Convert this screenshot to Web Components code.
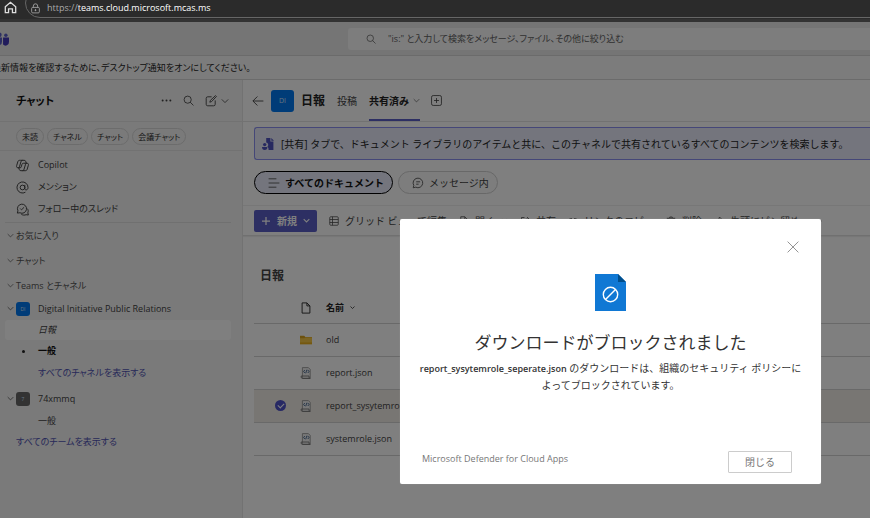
<!DOCTYPE html>
<html lang="ja">
<head>
<meta charset="utf-8">
<title>日報 | 共有済み</title>
<style>
    html, body {
        height: 100%;
        margin: 0;
        overflow: hidden;
    }
    body {
        font: 10px/16px "Open Sans", "Noto Sans CJK JP", sans-serif;
        color: #242424;
    }
</style>
</head>
<body>
<teams-window></teams-window>

<script>
class UIElement extends HTMLElement {
    constructor() {
        super();
        this.attachShadow({ mode: 'open' });
    }

    connectedCallback() {
        this.shadowRoot.innerHTML = `
            <style>
                * { box-sizing: border-box; }
                button, input {
                    margin: 0;
                    padding: 0;
                    border: 0;
                    background: none;
                    color: inherit;
                    font: inherit;
                    font-feature-settings: inherit;
                }
                a { color: inherit; text-decoration: none; }
                ${this.css()}
            </style>
            ${this.template()}
        `;
    }

    css() { return ''; }
    template() { return '<slot></slot>'; }
}

const ICONS = {
    home: '<path d="M2 9 10 2l8 7v9h-5v-6H7v6H2z"/>',
    lock: '<rect x="3" y="8" width="14" height="10" rx="2"/><path d="M6 8V5.500a4 4 0 0 1 8 0V8"/><circle cx="10" cy="13" r="1" fill="currentColor"/>',
    search: '<circle cx="8.500" cy="8.500" r="6.500"/><path d="m13 13 6 6"/>',
    more: '<g fill="currentColor" stroke="none"><circle cx="3" cy="10" r="1.800"/><circle cx="10" cy="10" r="1.800"/><circle cx="17" cy="10" r="1.800"/></g>',
    compose: '<path d="M11 3H4.500A2.500 2.500 0 0 0 2 5.500v10A2.500 2.500 0 0 0 4.500 18h10a2.500 2.500 0 0 0 2.500-2.500V9M8 12l1-3 8.500-8 1.500 1.500-8 8.500z"/>',
    chevron: '<path d="m2 6 8 8 8-8"/>',
    copilot: '<path d="M7 2h5.500c1.500 0 2 .7 2.500 2l.7 2.500H17c2 0 2.500 1.500 2 3.200l-1.700 5.800c-.5 1.700-1.300 2.500-3 2.500H7.500c-1.500 0-2-.7-2.500-2l-.7-2.500H3C1 13.500.5 12 1 10.300L2.700 4.500C3.200 2.800 4 2 5.700 2zM10 2c-1.500 0-2 1-2.400 2.300L5.300 12c-.3 1-.6 1.500-1.600 1.500M10 18c1.500 0 2-1 2.400-2.300L14.700 8c.3-1 .6-1.500 1.600-1.500h-4.500C10 6.500 9.500 7 9 8.800l-1 3.400c-.3 1-.8 1.300-1.800 1.300H4"/>',
    mention: '<circle cx="10" cy="10" r="3.600"/><path d="M13.600 6v5.500c0 3.300 4.900 3 4.900-1.500a8.500 8.500 0 1 0-4 7.200"/>',
    thread: '<path d="M2 15.500 3 12a7 7 0 1 1 3 3zM6.500 8.500l2 2 4-4M8 17c2 2 5.500 2 7.500 1l3.500.5-.8-3.500c1-2 .8-5-1.200-6.500"/>',
    back: '<path d="M19 10H1.500M9 2.500 1.500 10 9 17.500"/>',
    plusbox: '<rect x="1" y="1" width="18" height="18" rx="3"/><path d="M10 5.500v9M5.500 10h9"/>',
    lines: '<path d="M1 3h13M1 10h18M1 17h13"/>',
    message: '<path d="m2 18 1-4a8 8 0 1 1 3.200 3zM7 8h6.500M7 12h4"/>',
    plus: '<path d="M10 2v16M2 10h16"/>',
    grid: '<rect x="1.500" y="1.500" width="17" height="17" rx="2"/><path d="M7 1.500v17M1.500 7h17M1.500 13h17"/>',
    file: '<path d="M3.500 1.500h8l5 5v12h-13zM11.500 1.500v5h5"/>',
    share: '<path d="M9 3H3v14h14v-5M7 12c0-5 4-6 11-6M14 2l4 4-4 4"/>',
    link: '<path d="M8 5H6a5 5 0 0 0 0 10h2M12 5h2a5 5 0 0 1 0 10h-2M6 10h8"/>',
    trash: '<path d="M1.500 4.500h17M7.500 4.500V2h5v2.500M4 4.500l1 14h10l1-14M8 8v7M12 8v7"/>',
    pin: '<path d="m11 2 7 7-3 1-3 3-1 4-8-8 4-1 3-3zM6 13l-5 5"/>',
    close: '<path d="m1 1 18 18M19 1 1 19"/>',
    teams: '<g stroke="none" fill="#5b5fc7"><circle cx="6" cy="4" r="3.500"/><circle cx="15.500" cy="4.500" r="2.500"/><path d="M0 8h10v6a5 5 0 0 1-10 0z"/><path fill="#4338b8" d="M11.500 8H20v6a5 5 0 0 1-8.500 4z"/></g>',
    shared: '<g stroke="none" fill="#4f52c0"><path d="M7 0h7v6h5v14h-8c0-3-.5-4.500-2-5.500A4 4 0 0 0 7 7.500z"/><path d="M15.500 0 20 4.500h-4.500z"/><circle cx="4.500" cy="11" r="2.800"/><path d="M0 15h9c0 3-1.500 5-4.500 5S0 18 0 15z"/></g>',
    folder: '<g stroke="none"><path fill="#d9a21c" d="M0 3h7l2 2h11v4H0z"/><path fill="#f7c948" d="M0 7h7l2-1h11v11H0z"/><path fill="#eab020" d="M0 14h20v3H0z"/></g>',
    json: '<path fill="#f0f0f0" stroke="#999" d="M4 1h10l3 3v15H4z"/><path stroke="#777" d="M2 15h13v2c0 1 .7 2 2 2H4c-1.300 0-2-1-2-2z"/><path stroke="#40608a" d="M8 5 6 7.500 8 10M13 5l2 2.500-2 2.500M11.500 4.500l-2 6"/>',
    blocked: '<path stroke="none" fill="#1078d4" d="M0 0h23l8 8v29H0z"/><path stroke="none" fill="#004e8c" d="M23 0v8h8z"/><g stroke="#fff" stroke-width="1.400"><circle cx="15.500" cy="20.500" r="7.200"/><path d="m10.500 25.500 10-10"/></g>'
};

class UIIcon extends UIElement {
    css() {
        return `
            :host {
                display: inline-block;
                flex: none;
                width: 12px;
                height: 12px;
            }
            svg { display: block; width: 100%; height: 100%; overflow: visible; }
        `;
    }

    template() {
        const name = this.getAttribute('name');
        const box = name === 'blocked' ? '0 0 31 37' : '0 0 20 20';
        const weight = this.getAttribute('weight') || '1.5';
        return `<svg viewBox="${box}" fill="none" stroke="currentColor" stroke-width="${weight}" aria-hidden="true">${ICONS[name]}</svg>`;
    }
}

class BrowserBar extends UIElement {
    css() {
        return `
            :host {
                display: flex;
                height: 22px;
                flex: none;
                padding-left: 4px;
                gap: 8px;
                background: #2b2b2b;
                border-bottom: 3px solid #333;
                color: #ddd;
                font-size: 9px;
                overflow: hidden;
            }
            .home { margin-top: 1px; width: 13px; height: 13px; }
            .address {
                flex: 1;
                display: flex;
                align-items: center;
                gap: 6px;
                height: 30px;
                margin-top: -12px;
                margin-right: -20px;
                padding: 10px 0 0 4px;
                border: 1px solid #666;
                border-radius: 15px;
                color: #aaa;
            }
            .address ui-icon { width: 11px; height: 11px; }
            b { font-weight: 400; color: #fff; }
        `;
    }

    template() {
        return `
            <ui-icon class="home" name="home" weight="2"></ui-icon>
            <div class="address"><ui-icon name="lock"></ui-icon><span>https://<b>teams.cloud.microsoft.mcas.ms</b></span></div>
        `;
    }
}

class TitleBar extends UIElement {
    css() {
        return `
            :host {
                display: flex;
                justify-content: space-between;
                align-items: center;
                flex: none;
                height: 34px;
                background: #ebebeb;
                border-bottom: 1px solid #d6d6d6;
                overflow: hidden;
                font-size: 9px;
                font-feature-settings: "palt";
            }
            .logo { width: 14px; height: 14px; margin-left: -5px; }
            label {
                display: flex;
                align-items: center;
                gap: 12px;
                width: 60%;
                height: 22px;
                padding-left: 18px;
                border-radius: 3px 0 0 3px;
                background: #fafafa;
                color: #616161;
            }
            label ui-icon { width: 10px; height: 10px; }
            input { flex: 1; outline: 0; }
            input::placeholder { color: #616161; opacity: 1; }
        `;
    }

    template() {
        return `
            <ui-icon class="logo" name="teams"></ui-icon>
            <label><ui-icon name="search"></ui-icon><input type="search" aria-label="検索" placeholder='"is:" と入力して検索をメッセージ、ファイル、その他に絞り込む'></label>
        `;
    }
}

class NoticeBar extends UIElement {
    css() {
        return `
            :host {
                display: block;
                flex: none;
                height: 24px;
                font-size: 9px;
                line-height: 23px;
                background: #f8f8f8;
                border-bottom: 1px solid #d6d6d6;
                overflow: hidden;
                white-space: nowrap;
                text-indent: -8px;
                font-feature-settings: "palt";
            }
        `;
    }
}

class SideRow extends UIElement {
    css() {
        return `
            :host {
                display: grid;
                grid-template-columns: 11px 22px 1fr;
                align-items: center;
                height: 22px;
                margin: 0 11px 0 5px;
                color: #424242;
                white-space: nowrap;
            }
            :host([kind="group"]) {
                grid-template-columns: 11px 1fr;
                height: 25px;
                color: #545454;
            }
            :host([kind="channel"]) { height: 21px; }
            :host([kind="link"]) { color: #4f52b2; }
            :host([flush]) { grid-template-columns: 11px 0 1fr; }
            :host([selected]) {
                height: 20px;
                border-radius: 3px;
                background: #fff;
                font-style: italic;
            }
            :host([bold]) { font-weight: 700; color: #111; }
            .arrow { width: 7px; height: 7px; margin-left: 2px; }
            .lead { display: flex; align-items: center; }
        `;
    }

    template() {
        const kind = this.getAttribute('kind');
        const arrow = this.hasAttribute('open') ? '<ui-icon class="arrow" name="chevron" weight="2"></ui-icon>' : '';
        const lead = kind === 'group' ? '' : '<span class="lead"><slot name="lead"></slot></span>';
        return `<span>${arrow}</span>${lead}<slot></slot>`;
    }
}

class TeamAvatar extends UIElement {
    css() {
        return `
            :host {
                display: flex;
                align-items: center;
                justify-content: center;
                width: 14px;
                height: 14px;
                border-radius: 3px;
                background: #0078f0;
                color: #cfe4ff;
                font-size: 5px;
                line-height: 5px;
            }
            :host([large]) { width: 23px; height: 22px; font-size: 7px; flex: none; }
            :host([gray]) { background: #666; }
        `;
    }
}

class ChatSidebar extends UIElement {
    css() {
        return `
            :host {
                display: block;
                width: 243px;
                flex: none;
                background: #f4f4f4;
                border-right: 1px solid #e4e4e4;
                font-size: 9px;
                font-feature-settings: "palt";
            }
            header {
                display: flex;
                align-items: center;
                gap: 11px;
                height: 42px;
                padding: 0 13px 0 16px;
                border-bottom: 1px solid #e4e4e4;
                color: #424242;
            }
            h1 { flex: 1; margin: 0; font-size: 11px; color: #111; }
            header button { display: flex; align-items: center; gap: 4px; }
            header .small { width: 11px; height: 11px; }
            header .arrow { width: 8px; height: 8px; }
            .filters {
                display: flex;
                gap: 3px;
                height: 29px;
                padding: 6px 16px;
                border-bottom: 1px solid #e4e4e4;
            }
            .filters button {
                height: 17px;
                padding: 0 5px;
                border: 1px solid #d8d8d8;
                border-radius: 9px;
                font-size: 8px;
                line-height: 15px;
                color: #333;
                white-space: nowrap;
            }
            nav { padding-top: 3px; }
            hr {
                margin: 2px 11px 0 5px;
                border: 0;
                border-top: 1px solid #e0e0e0;
            }
            .team { margin-top: 4px; }
            i { width: 3px; height: 3px; margin-left: 6px; border-radius: 50%; background: #222; }
            side-row ui-icon { width: 13px; height: 13px; }
        `;
    }

    template() {
        return `
            <header>
                <h1>チャット</h1>
                <button aria-label="その他"><ui-icon class="small" name="more"></ui-icon></button>
                <button aria-label="検索"><ui-icon class="small" name="search"></ui-icon></button>
                <button aria-label="新しいチャット"><ui-icon name="compose"></ui-icon><ui-icon class="arrow" name="chevron" weight="2"></ui-icon></button>
            </header>
            <div class="filters">
                <button>未読</button><button>チャネル</button><button>チャット</button><button>会議チャット</button>
            </div>
            <nav>
                <side-row><ui-icon slot="lead" name="copilot"></ui-icon>Copilot</side-row>
                <side-row><ui-icon slot="lead" name="mention"></ui-icon>メンション</side-row>
                <side-row><ui-icon slot="lead" name="thread"></ui-icon>フォロー中のスレッド</side-row>
                <hr>
                <side-row kind="group" open>お気に入り</side-row>
                <side-row kind="group" open>チャット</side-row>
                <side-row kind="group" open>Teams とチャネル</side-row>
                <side-row open><team-avatar slot="lead">DI</team-avatar>Digital Initiative Public Relations</side-row>
                <side-row selected>日報</side-row>
                <side-row bold><i slot="lead"></i>一般</side-row>
                <side-row kind="link"><a href="#">すべてのチャネルを表示する</a></side-row>
                <side-row class="team" open><team-avatar slot="lead" gray>7</team-avatar>74xmmq</side-row>
                <side-row kind="channel">一般</side-row>
                <side-row kind="link" flush><a href="#">すべてのチームを表示する</a></side-row>
            </nav>
        `;
    }
}

class ChannelHeader extends UIElement {
    css() {
        return `
            :host {
                display: flex;
                align-items: center;
                height: 42px;
                padding-left: 9px;
                gap: 7px;
                border-bottom: 1px solid #e4e4e4;
                white-space: nowrap;
            }
            h2 { margin: 0; font-size: 12px; }
            button { display: flex; align-items: center; gap: 4px; color: #424242; }
            .tab { height: 41px; margin-left: 5px; padding-top: 2px; border-bottom: 2px solid transparent; }
            .tab[aria-selected="true"] { border-color: #5b5fc7; font-weight: 700; color: #222; }
            .tab ui-icon { width: 7px; height: 7px; }
            .add { margin-left: 4px; }
            .add ui-icon { width: 11px; height: 11px; }
        `;
    }

    template() {
        return `
            <button aria-label="戻る"><ui-icon name="back"></ui-icon></button>
            <team-avatar large>DI</team-avatar>
            <h2>日報</h2>
            <button class="tab" role="tab">投稿</button>
            <button class="tab" role="tab" aria-selected="true">共有済み<ui-icon name="chevron"></ui-icon></button>
            <button class="add" aria-label="タブを追加"><ui-icon name="plusbox"></ui-icon></button>
        `;
    }
}

class InfoBanner extends UIElement {
    css() {
        return `
            :host {
                display: flex;
                align-items: center;
                gap: 7px;
                box-sizing: border-box;
                height: 33px;
                margin: 5px 0 11px 11px;
                padding-left: 7px;
                border: 1px solid #8b8ff0;
                border-right: 0;
                border-radius: 3px 0 0 3px;
                background: #e8ebfa;
                white-space: nowrap;
                overflow: hidden;
            }
        `;
    }

    template() {
        return '<ui-icon name="shared"></ui-icon><span><slot></slot></span>';
    }
}

class FilterChip extends UIElement {
    css() {
        return `
            :host { display: block; }
            button {
                display: flex;
                align-items: center;
                gap: 5px;
                height: 23px;
                padding: 0 8px 0 13px;
                border: 1px solid #d0d0d0;
                border-radius: 12px;
                background: #fafafa;
                color: #424242;
                white-space: nowrap;
            }
            :host([active]) button {
                border-color: #000;
                background: #e8ebfa;
                color: #111;
                font-weight: 700;
            }
            ui-icon { color: #555; }
        `;
    }

    template() {
        const pressed = this.hasAttribute('active');
        return `<button aria-pressed="${pressed}"><ui-icon name="${this.getAttribute('icon')}"></ui-icon><slot></slot></button>`;
    }
}

class FileToolbar extends UIElement {
    css() {
        return `
            :host {
                display: flex;
                align-items: center;
                gap: 12px;
                height: 31px;
                padding-left: 11px;
                border-top: 1px solid #eee;
                border-bottom: 1px solid #e0e0e0;
                box-shadow: 0 1px 1px #eee;
                white-space: nowrap;
                color: #444;
                overflow: hidden;
            }
            button { display: flex; align-items: center; gap: 6px; }
            ui-icon { width: 10px; height: 10px; }
            .arrow { width: 7px; height: 7px; }
            .new {
                height: 22px;
                padding: 0 7px;
                border-radius: 2px;
                background: #5b5fc7;
                color: #fff;
                font-weight: 700;
            }
        `;
    }

    template() {
        const arrow = '<ui-icon class="arrow" name="chevron" weight="3"></ui-icon>';
        const items = [
            ['grid', 'グリッド ビューで編集'],
            ['file', '開く', arrow],
            ['share', '共有'],
            ['link', 'リンクのコピー'],
            ['trash', '削除'],
            ['pin', '先頭にピン留め']
        ];
        return `
            <button class="new"><ui-icon name="plus" weight="2.5"></ui-icon>新規${arrow}</button>
            ${items.map(([icon, text, after = '']) => `<button><ui-icon name="${icon}"></ui-icon>${text}${after}</button>`).join('')}
            <button aria-label="その他"><ui-icon name="more"></ui-icon></button>
        `;
    }
}

class FileList extends UIElement {
    css() {
        return `
            :host { display: block; padding-left: 11px; }
            h3 {
                margin: 0;
                padding: 30px 6px 8px;
                font-size: 12px;
                line-height: 20px;
                font-weight: 600;
                color: #444;
            }
            table { width: 100%; border-collapse: collapse; table-layout: fixed; font-size: 9px; }
            th, td {
                height: 33px;
                padding: 0;
                border-bottom: 1px solid #d2d2d2;
                text-align: left;
                color: #424242;
            }
            th { height: 29px; color: #222; }
            .check { width: 46px; }
            .type { width: 26px; }
            td:first-child { padding-left: 21px; }
            th ui-icon, td ui-icon { display: block; }
            th .arrow { display: inline-block; width: 5px; height: 5px; margin: 0 0 1px 6px; }
            tr[aria-selected="true"] td { background: #f1ece7; }
            input {
                display: block;
                appearance: none;
                width: 11px;
                height: 11px;
                border-radius: 50%;
            }
            input:checked { background: #4f52c8; }
            input:checked::after {
                content: "";
                display: block;
                width: 5px;
                height: 3px;
                margin: 3px;
                border: solid #fff;
                border-width: 0 0 1px 1px;
                transform: rotate(-45deg);
            }
        `;
    }

    template() {
        const files = ['old', 'report.json', 'report_sysytemrole_seperate.json', 'systemrole.json'];
        const rows = files.map((name, i) => `
            <tr aria-selected="${i === 2}">
                <td><input type="checkbox" aria-label="${name}" ${i === 2 ? 'checked' : ''}></td>
                <td><ui-icon name="${i ? 'json' : 'folder'}"></ui-icon></td>
                <td>${name}</td>
            </tr>
        `).join('');
        return `
            <h3>日報</h3>
            <table>
                <thead><tr><th class="check"></th><th class="type"><ui-icon name="file"></ui-icon></th><th>名前<ui-icon class="arrow" name="chevron" weight="3"></ui-icon></th></tr></thead>
                <tbody>${rows}</tbody>
            </table>
        `;
    }
}

class BlockedDialog extends UIElement {
    css() {
        return `
            :host {
                position: absolute;
                top: 219px;
                right: 49px;
                display: flex;
                flex-direction: column;
                align-items: center;
                box-sizing: border-box;
                width: 421px;
                padding: 22px 18px 11px;
                border-radius: 2px;
                background: #fff;
                color: #333;
                box-shadow: 0 0 1px #aaa;
            }
            .close { align-self: flex-end; margin-right: 4px; color: #888; }
            .close ui-icon { display: block; }
            .file { width: 31px; height: 37px; margin-top: 21px; }
            h2 {
                margin: 20px 0 5px;
                font-size: 17px;
                line-height: 24px;
                font-weight: 400;
            }
            p { margin: 0; text-align: center; }
            b { font-size: 9px; font-weight: 600; }
            footer {
                display: flex;
                justify-content: space-between;
                align-self: stretch;
                height: 22px;
                margin-top: 58px;
                padding: 0 11px 0 4px;
                color: #777;
            }
            footer span { font-size: 9px; }
            footer button {
                width: 64px;
                border: 1px solid #ccc;
                border-radius: 1px;
            }
        `;
    }

    template() {
        return `
            <button class="close" aria-label="閉じる"><ui-icon name="close"></ui-icon></button>
            <ui-icon class="file" name="blocked"></ui-icon>
            <h2>ダウンロードがブロックされました</h2>
            <p><b>report_sysytemrole_seperate.json</b> のダウンロードは、組織のセキュリティ ポリシーによってブロックされています。</p>
            <footer><span>Microsoft Defender for Cloud Apps</span><button>閉じる</button></footer>
        `;
    }
}

class TeamsWindow extends UIElement {
    css() {
        return `
            :host {
                position: relative;
                display: flex;
                flex-direction: column;
                height: 100%;
                overflow: hidden;
            }
            .app {
                position: relative;
                display: flex;
                flex-direction: column;
                flex: 1;
                min-height: 0;
            }
            .backdrop { position: absolute; inset: 0; background: rgba(0, 0, 0, .5); }
            .body { display: flex; flex: 1; min-height: 0; }
            main { flex: 1; min-width: 0; background: #fff; }
            .chips { display: flex; gap: 5px; padding: 0 0 11px 11px; }
        `;
    }

    template() {
        return `
            <browser-bar></browser-bar>
            <div class="app">
                <title-bar></title-bar>
                <notice-bar>最新情報を確認するために、デスクトップ通知をオンにしてください。</notice-bar>
                <div class="body">
                    <chat-sidebar></chat-sidebar>
                    <main>
                        <channel-header></channel-header>
                        <info-banner>[共有] タブで、ドキュメント ライブラリのアイテムと共に、このチャネルで共有されているすべてのコンテンツを検索します。</info-banner>
                        <div class="chips">
                            <filter-chip icon="lines" active>すべてのドキュメント</filter-chip>
                            <filter-chip icon="message">メッセージ内</filter-chip>
                        </div>
                        <file-toolbar></file-toolbar>
                        <file-list></file-list>
                    </main>
                </div>
                <div class="backdrop"></div>
            </div>
            <blocked-dialog></blocked-dialog>
        `;
    }
}

customElements.define('ui-icon', UIIcon);
customElements.define('team-avatar', TeamAvatar);
customElements.define('side-row', SideRow);
customElements.define('filter-chip', FilterChip);
customElements.define('browser-bar', BrowserBar);
customElements.define('title-bar', TitleBar);
customElements.define('notice-bar', NoticeBar);
customElements.define('chat-sidebar', ChatSidebar);
customElements.define('channel-header', ChannelHeader);
customElements.define('info-banner', InfoBanner);
customElements.define('file-toolbar', FileToolbar);
customElements.define('file-list', FileList);
customElements.define('blocked-dialog', BlockedDialog);
customElements.define('teams-window', TeamsWindow);
</script>
</body>
</html>
